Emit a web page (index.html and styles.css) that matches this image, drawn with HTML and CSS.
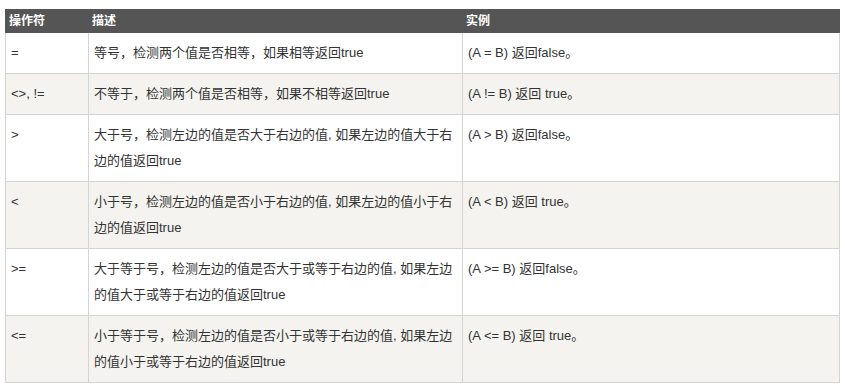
FILE: index.html
```html
<!DOCTYPE html>
<html lang="zh-CN">
<head>
<meta charset="utf-8">
<title>运算符</title>
<link rel="stylesheet" href="styles.css">
</head>
<body>
<div class="wrap">
<table class="reference">
  <colgroup>
    <col class="c1">
    <col class="c2">
    <col class="c3">
  </colgroup>
  <thead>
    <tr><th>操作符</th><th>描述</th><th>实例</th></tr>
  </thead>
  <tbody>
    <tr><td>=</td><td>等号，检测两个值是否相等，如果相等返回true</td><td>(A = B) 返回false。</td></tr>
    <tr><td>&lt;&gt;, !=</td><td>不等于，检测两个值是否相等，如果不相等返回true</td><td>(A != B) 返回 true。</td></tr>
    <tr><td>&gt;</td><td>大于号，检测左边的值是否大于右边的值, 如果左边的值大于右边的值返回true</td><td>(A &gt; B) 返回false。</td></tr>
    <tr><td>&lt;</td><td>小于号，检测左边的值是否小于右边的值, 如果左边的值小于右边的值返回true</td><td>(A &lt; B) 返回 true。</td></tr>
    <tr><td>&gt;=</td><td>大于等于号，检测左边的值是否大于或等于右边的值, 如果左边的值大于或等于右边的值返回true</td><td>(A &gt;= B) 返回false。</td></tr>
    <tr><td>&lt;=</td><td>小于等于号，检测左边的值是否小于或等于右边的值, 如果左边的值小于或等于右边的值返回true</td><td>(A &lt;= B) 返回 true。</td></tr>
  </tbody>
</table>
</div>
</body>
</html>
```
FILE: styles.css
```css
html, body {
  margin: 0;
  padding: 0;
  background: #fff;
}
.wrap {
  padding: 9px 0 0 5px;
}
.reference {
  border-collapse: collapse;
  width: 834px;
  table-layout: fixed;
  font-family: "Liberation Sans", "Noto Sans CJK SC", sans-serif;
  color: #333;
}
.c1 { width: 83px; }
.c2 { width: 374px; }
.c3 { width: 377px; }
.reference th {
  background: #555;
  color: #fff;
  border: 1px solid #555;
  padding: 3px 3px;
  font-size: 12px;
  font-weight: bold;
  line-height: 16px;
  text-align: left;
  vertical-align: top;
}
.reference td {
  border: 1px solid #d4d4d4;
  padding: 7px 5px;
  font-size: 13px;
  line-height: 26px;
  vertical-align: top;
  background: #fff;
}
.reference tbody tr:nth-child(even) td {
  background: #f4f3ef;
}
```
